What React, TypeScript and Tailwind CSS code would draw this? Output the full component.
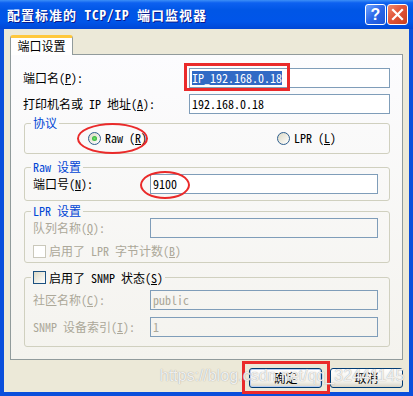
import React from "react";

function Radio({ checked }: { checked?: boolean }) {
  return (
    <span className="flex h-[13px] w-[13px] shrink-0 items-center justify-center rounded-full border border-[#2f5f8f] bg-[linear-gradient(135deg,#dcd9c5,#ffffff)]">
      {checked && (
        <span className="h-[5px] w-[5px] rounded-full bg-[radial-gradient(circle,#6fe06f,#21a121)]" />
      )}
    </span>
  );
}

function Check({ disabled }: { disabled?: boolean }) {
  return disabled ? (
    <span className="block h-[13px] w-[13px] shrink-0 border border-[#cac8bb] bg-white" />
  ) : (
    <span className="block h-[13px] w-[13px] shrink-0 border border-[#1c5180] bg-[linear-gradient(135deg,#dcd9c5,#ffffff)]" />
  );
}

function Field({
  children,
  disabled,
  className,
}: {
  children?: React.ReactNode;
  disabled?: boolean;
  className?: string;
}) {
  return (
    <div
      className={
        "flex h-[20px] shrink-0 items-center border border-[#7f9db9] pl-[2px] whitespace-pre " +
        (disabled ? "bg-transparent text-[#aca899] " : "bg-white text-black ") +
        (className ?? "")
      }
    >
      {children}
    </div>
  );
}

export default function App() {
  return (
    <div className="relative h-[396px] w-[413px] overflow-hidden bg-[#0a4fdc] font-['Noto_Sans_Mono_CJK_SC','Noto_Sans_CJK_SC',sans-serif] text-[12px] leading-[14px] text-black">
      {/* Title bar */}
      <div className="flex h-[29px] items-center bg-[linear-gradient(to_bottom,#3d8ff7_0%,#0d61f0_10%,#0056e6_35%,#0055e9_75%,#0047d6_100%)] pl-[7px] pr-[5px]">
        <span className="flex-1 whitespace-pre text-[13px] font-bold tracking-[1px] text-white [text-shadow:1px_1px_0_#0a1a8c]">
          配置标准的 TCP/IP 端口监视器
        </span>
        <div className="flex gap-[1px]">
          <div className="flex h-[21px] w-[21px] items-center justify-center rounded-[3px] border border-white bg-[linear-gradient(135deg,#6fa3ff,#2a66e8_50%,#1d55d6)] font-['Liberation_Sans',Arial,sans-serif] text-[16px] font-bold leading-none text-white">
            ?
          </div>
          <div className="flex h-[21px] w-[21px] items-center justify-center rounded-[3px] border border-white bg-[linear-gradient(135deg,#f08a6c,#e2553a_45%,#c93f1e)]">
            <svg width="13" height="13" viewBox="0 0 13 13">
              <path d="M2 2 L11 11 M11 2 L2 11" stroke="white" strokeWidth="2.2" strokeLinecap="square" />
            </svg>
          </div>
        </div>
      </div>

      {/* Body */}
      <div className="mx-[4px] flex h-[363px] flex-col bg-[#ece9d8] px-[6px] pt-[6px]">
        {/* Tab */}
        <div className="flex">
          <div className="relative z-10 -mb-px flex h-[20px] w-[63px] items-center justify-center rounded-t-[3px] border-x border-t-[3px] border-x-[#919b9c] border-t-[#ffc83c] bg-white pb-[1px]">
            端口设置
          </div>
        </div>

        {/* Panel */}
        <div className="flex flex-col border border-[#919b9c] bg-[linear-gradient(to_bottom,#fcfcfe,#f4f3ee)] pb-[12px]">
          <div className="mt-[13px] flex items-center px-[12px]">
            <span>
              端口名(<u>P</u>):
            </span>
            <Field className="ml-auto w-[201px]">
              <span className="bg-[#316ac5] text-white">IP_192.168.0.18</span>
            </Field>
          </div>
          <div className="mt-[6px] flex items-center px-[12px]">
            <span className="whitespace-pre">
              打印机名或 IP 地址(<u>A</u>):
            </span>
            <Field className="ml-auto w-[201px]">192.168.0.18</Field>
          </div>

          {/* 协议 */}
          <fieldset className="mt-[2px] ml-[13px] mr-[12px] rounded-[3px] border border-[#d0d0bf] pb-[7px] pl-[8px] pr-[11px]">
            <legend className="-ml-[2px] px-[2px] leading-[14px] text-[#0046d5]">协议</legend>
            <div className="flex h-[16px] items-center">
              <div className="ml-[55px] flex w-[189px] items-center gap-[4px]">
                <Radio checked />
                <span className="whitespace-pre">
                  Raw (<u>R</u>)
                </span>
              </div>
              <div className="flex items-center gap-[4px]">
                <Radio />
                <span className="whitespace-pre">
                  LPR (<u>L</u>)
                </span>
              </div>
            </div>
          </fieldset>

          {/* Raw 设置 */}
          <fieldset className="mt-[6px] ml-[13px] mr-[12px] rounded-[3px] border border-[#d0d0bf] pb-[6px] pl-[8px] pr-[11px]">
            <legend className="-ml-[2px] whitespace-pre px-[2px] leading-[14px] text-[#0046d5]">Raw 设置</legend>
            <div className="flex items-center">
              <span className="w-[117px] shrink-0">
                端口号(<u>N</u>):
              </span>
              <Field className="w-[228px]">9100</Field>
            </div>
          </fieldset>

          {/* LPR 设置 */}
          <fieldset className="mt-[3px] ml-[13px] mr-[12px] rounded-[3px] border border-[#d0d0bf] pb-[4px] pl-[8px] pr-[11px]">
            <legend className="-ml-[2px] whitespace-pre px-[2px] leading-[14px] text-[#0046d5]">LPR 设置</legend>
            <div className="flex items-center">
              <span className="w-[117px] shrink-0 text-[#aca899]">
                队列名称(<u>Q</u>):
              </span>
              <Field disabled className="w-[228px]" />
            </div>
            <div className="mt-[6px] flex items-center gap-[3px]">
              <Check disabled />
              <span className="whitespace-pre text-[#aca899]">
                启用了 LPR 字节计数(<u>B</u>)
              </span>
            </div>
          </fieldset>

          {/* SNMP */}
          <fieldset className="mt-[8px] ml-[13px] mr-[12px] rounded-[3px] border border-[#d0d0bf] pb-[9px] pl-[8px] pr-[11px]">
            <legend className="-ml-[2px] flex h-[13px] items-center gap-[3px] px-[2px]">
              <Check />
              <span className="whitespace-pre">
                启用了 SNMP 状态(<u>S</u>)
              </span>
            </legend>
            <div className="mt-[6px] flex items-center">
              <span className="w-[117px] shrink-0 text-[#aca899]">
                社区名称(<u>C</u>):
              </span>
              <Field disabled className="w-[228px]">public</Field>
            </div>
            <div className="mt-[7px] flex items-center">
              <span className="w-[117px] shrink-0 whitespace-pre text-[#aca899]">
                SNMP 设备索引(<u>I</u>):
              </span>
              <Field disabled className="w-[228px]">1</Field>
            </div>
          </fieldset>
        </div>

        {/* Buttons */}
        <div className="mt-[8px] flex justify-end gap-[8px]">
          <div className="flex h-[20px] w-[73px] items-center justify-center rounded-[3px] border border-[#003c74] bg-[linear-gradient(to_bottom,#ffffff,#f3f2ec_70%,#d8d4c6)] shadow-[inset_0_0_0_1px_#b7cdf3]">
            确定
          </div>
          <div className="flex h-[20px] w-[73px] items-center justify-center rounded-[3px] border border-[#003c74] bg-[linear-gradient(to_bottom,#ffffff,#f3f2ec_70%,#d8d4c6)]">
            取消
          </div>
        </div>
      </div>

      {/* Red annotation marks */}
      <div className="pointer-events-none absolute left-[184px] top-[63px] h-[28px] w-[106px] border-[3px] border-[#ea2a2a]" />
      <div className="pointer-events-none absolute left-[77px] top-[123px] h-[31px] w-[71px] rounded-[50%] border-[2.5px] border-[#ea2a2a]" />
      <div className="pointer-events-none absolute left-[140px] top-[171px] h-[28px] w-[50px] rounded-[50%] border-[2.5px] border-[#ea2a2a]" />
      <div className="pointer-events-none absolute left-[242px] top-[361px] h-[33px] w-[88px] border-[3px] border-[#ea2a2a]" />

      {/* Watermark */}
      <div className="pointer-events-none absolute left-[160px] top-[367px] whitespace-pre font-['Liberation_Sans',Arial,sans-serif] text-[16px] leading-[18px] text-white/85 [text-shadow:0_0_1px_#8a8a8a]">
        https://blog.csdn.net/qq_32441145
      </div>
    </div>
  );
}
